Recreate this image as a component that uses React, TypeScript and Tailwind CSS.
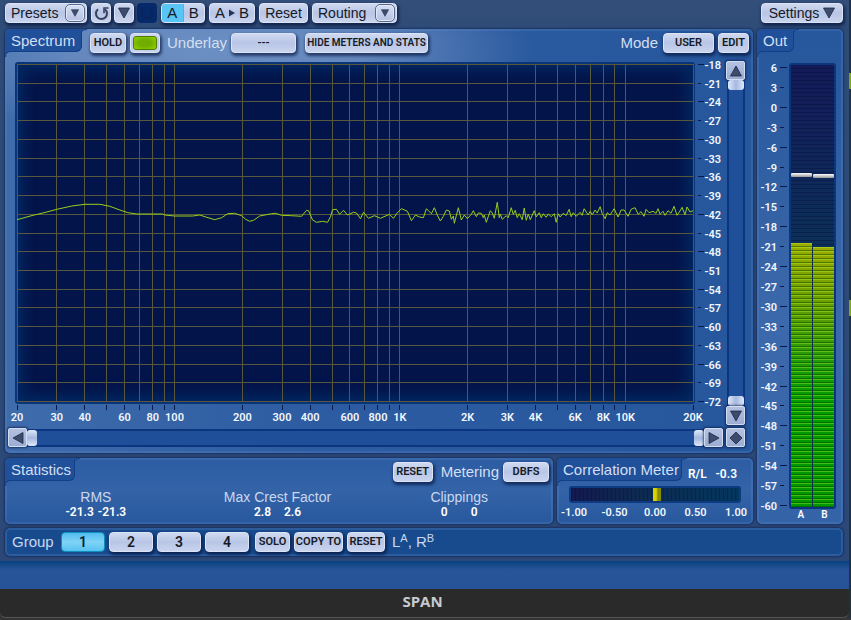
import type { ButtonHTMLAttributes, ReactNode } from "react";

const FACE =
  "rounded-[4px] border border-[#dbe3f5] bg-linear-to-b from-[#cfd9f0] via-[#b8c5e5] to-[#c9d4ee] text-[#151a26] shadow-[1px_2px_3px_1px_rgba(4,18,58,0.65)]";
const DISPLAY = "font-['Roboto','Liberation_Sans',sans-serif] font-semibold";

type BtnProps = ButtonHTMLAttributes<HTMLButtonElement>;

function ToolButton({ className = "", ...rest }: BtnProps) {
  return (
    <button
      type="button"
      className={`flex h-5 shrink-0 items-center justify-center whitespace-nowrap text-[14px] leading-4 ${FACE} ${className}`}
      {...rest}
    />
  );
}

function SmallButton({ className = "", ...rest }: BtnProps) {
  return (
    <button
      type="button"
      className={`flex h-5 shrink-0 items-center justify-center whitespace-nowrap text-[11px] leading-4 ${DISPLAY} ${FACE} ${className}`}
      {...rest}
    />
  );
}

function GroupButton({ active, children }: { active?: boolean; children: ReactNode }) {
  return (
    <button
      type="button"
      aria-pressed={!!active}
      className={
        active
          ? `h-5 w-11 rounded-[4px] border border-[#0c8fb8] bg-linear-to-b from-[#4fbdee] via-[#7fd3f6] to-[#55c2f0] text-[14px] leading-4 text-[#08203a] ${DISPLAY}`
          : `h-5 w-11 text-[14px] leading-4 ${DISPLAY} ${FACE}`
      }
    >
      {children}
    </button>
  );
}

function Triangle({ dir, size = 12 }: { dir: "up" | "down" | "left" | "right" | "diamond"; size?: number }) {
  const shapes = {
    up: "6,1 11.5,11 0.5,11",
    down: "0.5,1 11.5,1 6,11",
    left: "11,0.5 11,11.5 1,6",
    right: "1,0.5 11,6 1,11.5",
    diamond: "6,0 12,6 6,12 0,6",
  };
  return (
    <svg width={size} height={size} viewBox="0 0 12 12" aria-hidden="true">
      <polygon points={shapes[dir]} fill="#3d4b6c" stroke="#1f2a48" strokeWidth="0.8" />
    </svg>
  );
}

function DropMark() {
  return (
    <span className="flex h-[18px] w-5 items-center justify-center rounded-[5px] border border-[#5a688c] bg-linear-to-b from-[#d6dff3] to-[#b4c1e1] shadow-[inset_0_0_0_1px_#e2e9f8]">
      <Triangle dir="down" size={8} />
    </span>
  );
}

function ScrollButton({ dir, label }: { dir: "up" | "down" | "left" | "right" | "diamond"; label: string }) {
  return (
    <button
      type="button"
      aria-label={label}
      className="flex h-[19px] w-[19px] shrink-0 items-center justify-center rounded-[2px] border border-[#d3ddf2] bg-linear-to-b from-[#b4c1e1] to-[#9cadd4] shadow-[0_0_2px_1px_rgba(4,18,58,0.6)]"
    >
      <Triangle dir={dir} />
    </button>
  );
}

function Panel({ className = "", children }: { className?: string; children: ReactNode }) {
  return (
    <section
      className={`rounded-[5px] shadow-[inset_0_0_0_2px_rgba(90,135,200,0.28),0_0_2px_1px_rgba(14,34,80,0.6)] ${className}`}
    >
      {children}
    </section>
  );
}

/* Title tab in a panel's top left corner, with a flare on each side where it joins the panel edge. */
function PanelTab({ className = "", children }: { className?: string; children: ReactNode }) {
  return (
    <h2
      className={`relative h-[23px] shrink-0 rounded-tl-[5px] rounded-br-[6px] border-r border-b border-[#123f86] bg-[#20509a] pl-[6px] text-[15px] leading-6 whitespace-nowrap text-[#d3dff2] ${className}`}
    >
      {children}
      <svg className="absolute top-0 left-full" width="6" height="6" viewBox="0 0 6 6" aria-hidden="true">
        <path d="M-1 0 H6 Q-0.500 0.500 -0.500 6 H-1Z" fill="#20509a" />
        <path d="M6 0.500 Q-0.500 0.500 -0.500 6" fill="none" stroke="#123f86" />
      </svg>
      <svg className="absolute top-full left-0" width="6" height="6" viewBox="0 0 6 6" aria-hidden="true">
        <path d="M0 -1 V6 Q0.500 0.500 6 0.500 V-1Z" fill="#20509a" />
        <path d="M0.500 6 Q0.500 0.500 6 0.500" fill="none" stroke="#123f86" />
      </svg>
    </h2>
  );
}

const FREQS = [
  20, 30, 40, 50, 60, 70, 80, 90, 100, 200, 300, 400, 500, 600, 700, 800, 900, 1000, 2000, 3000, 4000, 5000, 6000,
  7000, 8000, 9000, 10000, 20000,
];
const UNLABELLED = new Set([50, 70, 90, 500, 700, 900, 5000, 7000, 9000]);
const freqX = (f: number) => `${((Math.log10(f / 20) / 3) * 100).toFixed(3)}%`;
const freqName = (f: number) => (f >= 1000 ? `${f / 1000}K` : `${f}`);

const LEVELS = Array.from({ length: 19 }, (_, i) => -18 - i * 3);
const OUT_LEVELS = Array.from({ length: 23 }, (_, i) => 6 - i * 3);
const levelY = (i: number) => Math.round((i * 337) / 18) + 0.5;

const CURVE =
  "0,155.7 16,151.3 26,149 40,145.3 55,142 68,140.3 83,140.3 93,142.3 103,146 111,148.7 120,150 146,150 148,151 158,152 176,152 183,151 190,153.3 198,155.7 205,153.7 211,149.7 218,149.3 225,151.7 229,155.3 233,157.3 237,156.3 243,152 255,149.7 259,149.3 265,151.3 275,151.7 285,152.3 290,146.3 292,146.7 296,156 300,158.3 306,157.3 311,158.3 314,152.7 316,145.7 320,145.3 323,150.3 327,146.3 331,151 337,148.3 340,149 344,154.7 347,148.3 352,154.3 358,151.7 364,154.3 373,150.3 377,154.3 381,148.7 385,144.7 391,147.3 395,156.7 399,151 403,153 407,153.7 410,144.7 415,149.7 418,143.7 421,151.3 424,157 427,152.3 430,146 433,147 435,155.3 437,152 438,159.3 442,143.7 445,156 448,151 451,154.7 455,150.3 457,146.7 460,152.7 462,149 465,149.3 467,153.7 468,151 470,158.3 474,146.7 476,149 478,154.3 481,138.3 483,153.7 484,150 486,155.3 490,151.7 492,153.7 495,143.7 497,150.3 499,146.3 501,153.7 503,149.7 506,155.7 508,144 510,156.3 512,150 514,155.7 518,146.7 520,153 523,148.7 525,153.7 527,149.7 530,153.3 532,150 535,152.7 538,149.7 540,158.3 542,149.7 544,153 547,149.3 550,151.500 553,145.3 555,152.7 557,148.7 560,152.3 564,148.3 566,151.3 568,144.7 572,151 574,147.3 576,150.7 579,146 581,149 584,142.7 586,149.3 589,154.7 591,148.7 594,151 598,144.7 600,149 602,153 605,146 608,146 612,152.3 615,145.3 619,143.7 622,150.3 625,147.7 628,152.3 630,145.3 633,148.7 637,147.3 640,149.3 642,144.7 644,150.3 647,147.3 649,151.3 652,146.7 655,149.3 658,142.3 661,151.3 664,147 666,143.3 669,150.7 671,143 674,148 677,146.7";

function SpectrumPlot() {
  return (
    <div className="rounded-[3px] border-2 border-[#0a3478] bg-[#03144a] shadow-[inset_0_0_14px_6px_rgba(2,48,108,0.75)]">
      <svg className="block h-[338px] w-full overflow-visible" aria-label="Spectrum">
        {FREQS.map((f) => (
          <line key={f} x1={freqX(f)} x2={freqX(f)} y1="0" y2="338" stroke="#59583c" shapeRendering="crispEdges" />
        ))}
        {LEVELS.map((l, i) => (
          <line key={l} x1="0" x2="100%" y1={levelY(i)} y2={levelY(i)} stroke="#59583c" shapeRendering="crispEdges" />
        ))}
        <svg width="100%" height="338" viewBox="0 0 677 338" preserveAspectRatio="none">
          <polyline
            points={CURVE}
            fill="none"
            stroke="#97cf1c"
            strokeWidth="1"
            vectorEffect="non-scaling-stroke"
            shapeRendering="crispEdges"
          />
        </svg>
      </svg>
    </div>
  );
}

function FreqAxis() {
  return (
    <svg className={`mx-[2px] block h-[22px] overflow-visible text-[11px] ${DISPLAY}`} style={{ width: "calc(100% - 4px)" }}>
      {FREQS.map((f) => (
        <g key={f}>
          <line x1={freqX(f)} x2={freqX(f)} y1="1" y2="6" stroke="#061a52" shapeRendering="crispEdges" />
          {!UNLABELLED.has(f) && (
            <text x={freqX(f)} y="17" textAnchor="middle" fill="#f2f6fd">
              {freqName(f)}
            </text>
          )}
        </g>
      ))}
    </svg>
  );
}

function LevelAxis() {
  return (
    <svg className={`block h-[364px] w-[31px] shrink-0 overflow-visible text-[11px] ${DISPLAY}`}>
      {LEVELS.map((l, i) => (
        <g key={l}>
          <line x1="3" x2={i % 2 ? 6 : 9} y1={levelY(i) + 3} y2={levelY(i) + 3} stroke="#061a52" />
          <text x="26" y={levelY(i) + 7} textAnchor="end" fill="#f2f6fd">
            {l}
          </text>
        </g>
      ))}
    </svg>
  );
}

const THUMB_H =
  "[&::-webkit-slider-thumb]:h-4 [&::-webkit-slider-thumb]:w-[10px] [&::-webkit-slider-thumb]:appearance-none [&::-webkit-slider-thumb]:rounded-[3px] [&::-webkit-slider-thumb]:bg-linear-to-b [&::-webkit-slider-thumb]:from-[#dfe8fa] [&::-webkit-slider-thumb]:via-[#a5b8e0] [&::-webkit-slider-thumb]:to-[#dfe8fa]";
const THUMB_V =
  "[&::-webkit-slider-thumb]:h-[10px] [&::-webkit-slider-thumb]:w-4 [&::-webkit-slider-thumb]:appearance-none [&::-webkit-slider-thumb]:rounded-[3px] [&::-webkit-slider-thumb]:bg-linear-to-r [&::-webkit-slider-thumb]:from-[#dfe8fa] [&::-webkit-slider-thumb]:via-[#a5b8e0] [&::-webkit-slider-thumb]:to-[#dfe8fa]";

function VerticalZoom() {
  const range = `m-0 block min-h-0 w-4 flex-1 appearance-none bg-transparent [writing-mode:vertical-lr] ${THUMB_V}`;
  return (
    <div className="flex h-[364px] w-[19px] shrink-0 flex-col items-center">
      <ScrollButton dir="up" label="Scroll up" />
      <div className="flex min-h-0 w-[18px] flex-1 flex-col items-center border-x-2 border-[#0c3580] bg-[#1e4f98]">
        <input type="range" aria-label="Upper level" defaultValue={0} className={range} />
        <input type="range" aria-label="Lower level" defaultValue={100} className={range} />
      </div>
      <ScrollButton dir="down" label="Scroll down" />
    </div>
  );
}

function HorizontalZoom() {
  const range = `m-0 block h-4 min-w-0 flex-1 appearance-none bg-transparent ${THUMB_H}`;
  return (
    <div className="flex items-center">
      <ScrollButton dir="left" label="Scroll left" />
      <div className="flex h-[18px] min-w-0 flex-1 items-center border-y-2 border-[#0c3580] bg-[#1e4f98]">
        <input type="range" aria-label="Lowest frequency" defaultValue={0} className={range} />
        <input type="range" aria-label="Highest frequency" defaultValue={100} className={range} />
      </div>
      <ScrollButton dir="right" label="Scroll right" />
      <div className="ml-[3px]">
        <ScrollButton dir="diamond" label="Reset view" />
      </div>
    </div>
  );
}

function SpectrumPanel() {
  return (
    <Panel className="h-[424px] bg-[radial-gradient(ellipse_320px_90px_at_210px_20px,#6b8fc2_0%,#6488be_45%,rgba(107,143,194,0)_100%),linear-gradient(to_right,#3f6cab_0%,#2d5ca2_40%,#26569b_100%)]">
      <div className="flex h-8 items-start">
        <PanelTab className="w-[77px]">Spectrum</PanelTab>
        <div className="flex flex-1 items-center pt-1 pr-1 text-[15px] leading-5 text-[#d3dff2]">
          <SmallButton className="ml-2 w-9">HOLD</SmallButton>
          <button type="button" aria-label="Hold active" className={`ml-1 h-5 w-[30px] p-[2px] ${FACE}`}>
            <span className="block h-full rounded-[3px] border border-[#4d7c00] bg-[radial-gradient(#6fae00_40%,#97d400)]" />
          </button>
          <span className="ml-[7px]">Underlay</span>
          <SmallButton aria-label="Underlay" className="ml-[4px] w-[65px]">---</SmallButton>
          <SmallButton className="ml-[9px] w-[123px]">
            <span className="text-[10px]">HIDE METERS AND STATS</span>
          </SmallButton>
          <span className="ml-auto">Mode</span>
          <SmallButton aria-label="Mode" className="ml-[5px] w-[51px]">USER</SmallButton>
          <SmallButton className="ml-1 w-[31px]">EDIT</SmallButton>
        </div>
      </div>
      <div className="flex pr-2 pl-[10px]">
        <div className="min-w-0 flex-1 pt-[1px]">
          <SpectrumPlot />
          <FreqAxis />
        </div>
        <LevelAxis />
        <VerticalZoom />
      </div>
      <div className="mt-[2px] pr-2 pl-[3px]">
        <HorizontalZoom />
      </div>
    </Panel>
  );
}

function Stat({ title, values, gap }: { title: string; values: string[]; gap: string }) {
  return (
    <div className="flex flex-1 flex-col items-center">
      <dt className="text-[14px] leading-4 text-[#c9d8ef]">{title}</dt>
      <dd className={`flex text-[12px] leading-[14px] text-white ${gap} ${DISPLAY}`}>
        {values.map((v, i) => (
          <span key={i}>{v}</span>
        ))}
      </dd>
    </div>
  );
}

const PANEL_BLUE = "bg-linear-to-b from-[#2c5ca2] via-[#3463a8] to-[#27579c]";

function StatisticsPanel() {
  return (
    <Panel className={`min-w-0 flex-1 ${PANEL_BLUE}`}>
      <div className="flex h-[31px] items-start">
        <PanelTab className="w-[70px]">Statistics</PanelTab>
        <div className="flex flex-1 items-center justify-end pt-1 pr-1 text-[15px] leading-5 text-[#d3dff2]">
          <SmallButton className="w-10">RESET</SmallButton>
          <span className="ml-2">Metering</span>
          <SmallButton aria-label="Metering" className="ml-[4px] w-[46px]">DBFS</SmallButton>
        </div>
      </div>
      <dl className="flex pr-[3px]">
        <Stat title="RMS" values={["-21.3", "-21.3"]} gap="gap-1" />
        <Stat title="Max Crest Factor" values={["2.8", "2.6"]} gap="gap-[13px]" />
        <Stat title="Clippings" values={["0", "0"]} gap="gap-[23px]" />
      </dl>
    </Panel>
  );
}

function CorrelationPanel() {
  return (
    <Panel className={`w-[196px] ${PANEL_BLUE}`}>
      <div className="flex h-7 items-start">
        <PanelTab className="w-[125px]">Correlation Meter</PanelTab>
        <div className={`flex flex-1 justify-between pt-1 pr-4 pl-[6px] text-[12px] leading-6 text-white ${DISPLAY}`}>
          <span>R/L</span>
          <span>-0.3</span>
        </div>
      </div>
      <div className="mx-3 flex h-[17px] justify-center rounded-[3px] border-2 border-[#0d3a80] bg-[repeating-linear-gradient(to_right,rgba(0,0,0,0.2)_0px_1px,transparent_1px_4px),linear-gradient(to_right,#14194f,#0e2a50_40%,#03365e)]">
        <span className="ml-[3px] h-full w-2 bg-linear-to-r from-[#d8d400] from-40% to-[#8a8c00] to-60%" />
      </div>
      <div className={`flex justify-between px-[2px] text-center text-[11px] leading-5 text-[#f2f6fd] ${DISPLAY}`}>
        {["-1.00", "-0.50", "0.00", "0.50", "1.00"].map((v) => (
          <span key={v} className="w-[30px]">
            {v}
          </span>
        ))}
      </div>
    </Panel>
  );
}

function MeterBar({ level, peak }: { level: number; peak: number }) {
  return (
    <div className="flex flex-1 flex-col">
      <div className="flex flex-col" style={{ height: level }}>
        <span className="block h-1 rounded-[1px] bg-linear-to-b from-white to-[#9a9a9a]" style={{ marginTop: peak }} />
      </div>
      <div className="flex-1 bg-[repeating-linear-gradient(to_bottom,rgba(190,255,60,0.35)_0px_1px,transparent_1px_3px,rgba(0,60,0,0.45)_3px_4px),linear-gradient(to_bottom,#9cab00_0%,#6f9f00_20%,#1f9a08_45%,#009c00_60%,#009600_100%)]" />
    </div>
  );
}

function OutPanel() {
  return (
    <Panel className="flex w-[86px] shrink-0 flex-col bg-linear-to-b from-[#26569b] via-[#3c69ab] via-60% to-[#3463a8]">
      <div className="flex h-[34px] items-start">
        <PanelTab className="w-[37px]">Out</PanelTab>
      </div>
      <div className="flex pr-[7px]">
        <svg className={`block h-[446px] w-6 flex-1 overflow-visible text-[11px] ${DISPLAY}`}>
          {OUT_LEVELS.map((l, i) => {
            const y = 5 + Math.round((i * 438) / 22);
            return (
              <g key={l}>
                <line x1="23" x2={i % 2 ? 27 : 30} y1={y - 0.5} y2={y - 0.5} stroke="#061a52" />
                <text x="20" y={y + 4} textAnchor="end" fill="#f2f6fd">
                  {l}
                </text>
              </g>
            );
          })}
        </svg>
        <div className="flex h-[446px] w-[47px] gap-[1px] rounded-[3px] border-2 border-[#0d357c] bg-[repeating-linear-gradient(to_bottom,transparent_0px_3px,rgba(0,10,50,0.35)_3px_4px),linear-gradient(to_bottom,#141a58,#10255a_20%,#0c3058_42%)]">
          <MeterBar level={178} peak={108} />
          <MeterBar level={182} peak={109} />
        </div>
      </div>
      <div className={`mr-[7px] ml-auto flex w-[47px] justify-around text-[10px] leading-3 text-white ${DISPLAY}`}>
        <span>A</span>
        <span>B</span>
      </div>
    </Panel>
  );
}

function Toolbar() {
  return (
    <header className="flex h-[29px] items-start pt-[3px]">
      <ToolButton className="w-[82px] justify-between! pr-[1px] pl-[5px]">
        Presets <DropMark />
      </ToolButton>
      <ToolButton aria-label="Undo" className="ml-1 w-5">
        <svg width="15" height="15" viewBox="0 0 15 15" fill="none" stroke="#36425f" strokeWidth="2" aria-hidden="true">
          <path d="M4 3.300 A5.500 5.500 0 1 0 10.800 3.200" />
          <path d="M10 7.200 V2 H14.500" strokeWidth="1.600" />
        </svg>
      </ToolButton>
      <ToolButton aria-label="Undo history" className="ml-[3px] w-5">
        <Triangle dir="down" />
      </ToolButton>
      <button
        type="button"
        aria-label="Redo"
        disabled
        className="ml-[3px] flex h-5 w-5 items-center justify-center rounded-[4px] bg-[#062a69]"
      >
        <svg width="14" height="14" viewBox="0 0 15 15" fill="none" stroke="#08245a" strokeWidth="2" aria-hidden="true">
          <path d="M11 3.300 A5.500 5.500 0 1 1 4.200 3.200" />
        </svg>
      </button>
      <div className={`ml-1 flex h-5 w-11 overflow-hidden text-[15px] leading-[18px] ${FACE}`}>
        <button type="button" aria-pressed="true" className="flex-1 bg-[#58c5f5]">
          A
        </button>
        <button type="button" aria-pressed="false" className="flex-1 border-l border-[#8b9bc2]">
          B
        </button>
      </div>
      <ToolButton aria-label="Copy A to B" className="ml-1 w-[46px] gap-1">
        <span className="text-[15px]">A</span>
        <svg width="6" height="8" viewBox="0 0 6 8" aria-hidden="true">
          <path d="M0 0.500 L6 4 L0 7.500Z" fill="#26345a" />
        </svg>
        <span className="text-[15px]">B</span>
      </ToolButton>
      <ToolButton className="ml-1 w-[49px]">Reset</ToolButton>
      <ToolButton className="ml-1 w-[85px] justify-between! pr-[1px] pl-[5px]">
        Routing <DropMark />
      </ToolButton>
      <ToolButton className="ml-auto w-[82px] gap-1">
        Settings <Triangle dir="down" />
      </ToolButton>
    </header>
  );
}

function GroupBar() {
  return (
    <Panel className="mt-1 flex h-7 items-center bg-[#184b8e] pl-[7px] text-[15px] leading-5 text-[#c9d8ef]">
      <span className="w-[49px]">Group</span>
      <div className="flex gap-1">
        <GroupButton active>1</GroupButton>
        <GroupButton>2</GroupButton>
        <GroupButton>3</GroupButton>
        <GroupButton>4</GroupButton>
      </div>
      <div className="ml-[6px] flex gap-1">
        <SmallButton className="w-[35px]">SOLO</SmallButton>
        <SmallButton className="w-[49px]">COPY TO</SmallButton>
        <SmallButton className="w-[38px]">RESET</SmallButton>
      </div>
      <span className="ml-[7px]">
        L<sup className="text-[11px]">A</sup>, R<sup className="text-[11px]">B</sup>
      </span>
    </Panel>
  );
}

export default function App() {
  return (
    <div className="min-h-screen bg-[#343434] font-['Liberation_Sans',Arial,sans-serif]">
      <div className="flex">
        <main className="min-w-0 flex-1 overflow-hidden rounded-b-[6px] border-b border-[#555] bg-[#2a2a2a]">
          <div className="bg-[linear-gradient(to_bottom,#334f79_0px,#2f4c78_28px,#2b4878_100%)] pr-[6px] pb-[5px] pl-[5px]">
            <Toolbar />
            <div className="flex gap-1">
              <div className="flex min-w-0 flex-1 flex-col">
                <SpectrumPanel />
                <div className="mt-[5px] flex h-[66px] gap-1">
                  <StatisticsPanel />
                  <CorrelationPanel />
                </div>
              </div>
              <OutPanel />
            </div>
            <GroupBar />
          </div>
          <div className="h-[28px] bg-linear-to-b from-[#05407f] to-[#275498] to-30%" />
          <footer className="h-7 pr-1 text-center font-['Open_Sans','Noto_Sans',sans-serif] text-[15px] leading-6 font-bold text-[#c6cbd2]">
            SPAN
          </footer>
        </main>
        <div className="flex w-[2px] flex-col bg-[#22303f]" aria-hidden="true">
          <span className="mt-[73px] h-4 bg-[#86a80a]" />
          <span className="mt-[211px] h-4 bg-[#86a80a]" />
        </div>
      </div>
    </div>
  );
}
